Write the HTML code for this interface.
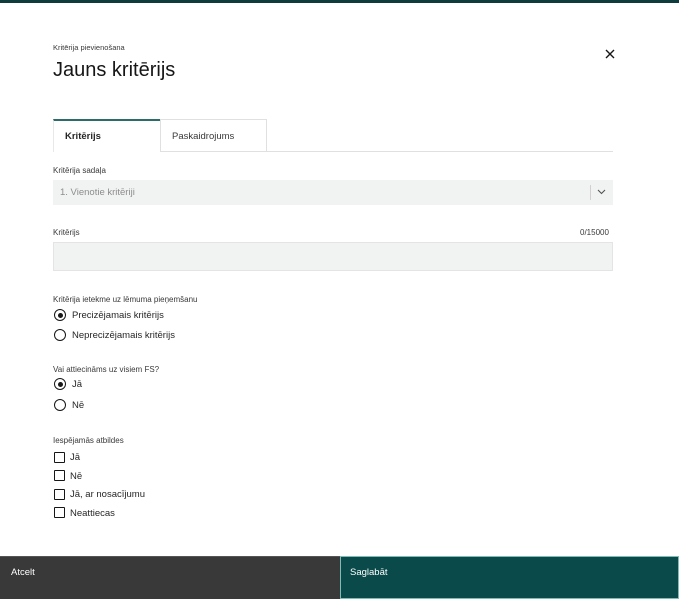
<!DOCTYPE html>
<html><head><meta charset="utf-8"><style>
*{margin:0;padding:0;box-sizing:border-box}
body{width:679px;height:599px;background:#fff;font-family:"Liberation Sans",sans-serif;color:#161616;position:relative;overflow:hidden}
.a{position:absolute;white-space:nowrap}
.lbl{font-size:8px;color:#393939}
.opt{font-size:9.5px;color:#262626}
.rad{position:absolute;width:12px;height:12px;border:1px solid #161616;border-radius:50%}
.rad.on::after{content:"";position:absolute;left:2.5px;top:2.5px;width:5px;height:5px;border-radius:50%;background:#161616}
.cb{position:absolute;width:11px;height:11px;border:1px solid #161616;border-radius:1px}
</style></head><body>
<div class="a" style="left:0;top:0;width:679px;height:3px;background:#0e3c3c"></div>
<div class="a lbl" style="left:53px;top:43px;font-size:7.5px">Kritērija pievienošana</div>
<div class="a" style="left:53px;top:59px;font-size:20px;color:#161616">Jauns kritērijs</div>
<svg class="a" style="left:605px;top:49px" width="10" height="10" viewBox="0 0 10 10"><path d="M1 1L9 9M9 1L1 9" stroke="#161616" stroke-width="1.4"/></svg>
<div class="a" style="left:53px;top:151px;width:560px;height:1px;background:#e0e0e0"></div>
<div class="a" style="left:53px;top:119px;width:107px;height:33px;background:#fff;border-top:2px solid #2d6b6b;border-left:1px solid #e8e8e8"></div>
<div class="a" style="left:65px;top:131px;font-size:9.5px;font-weight:bold;color:#262626">Kritērijs</div>
<div class="a" style="left:160px;top:119px;width:107px;height:33px;border:1px solid #e0e0e0;border-bottom:none"></div>
<div class="a" style="left:172px;top:131px;font-size:9.5px;color:#393939">Paskaidrojums</div>
<div class="a lbl" style="left:53px;top:166px">Kritērija sadaļa</div>
<div class="a" style="left:53px;top:180px;width:560px;height:25px;background:#f1f2f2"></div>
<div class="a" style="left:60px;top:187px;font-size:9.5px;color:#8d8d8d">1. Vienotie kritēriji</div>
<div class="a" style="left:590px;top:185px;width:1px;height:15px;background:#d0d0d0"></div>
<svg class="a" style="left:597px;top:189px" width="9" height="6" viewBox="0 0 9 6"><path d="M1 1L4.5 4.5L8 1" stroke="#525252" fill="none" stroke-width="1.1"/></svg>
<div class="a lbl" style="left:53px;top:228px">Kritērijs</div>
<div class="a lbl" style="left:580px;top:228px">0/15000</div>
<div class="a" style="left:53px;top:242px;width:560px;height:29px;background:#f1f2f2;border:1px solid #e4e4e4"></div>
<div class="a lbl" style="left:53px;top:295px">Kritērija ietekme uz lēmuma pieņemšanu</div>
<div class="rad on" style="left:54px;top:309px"></div><div class="a opt" style="left:72px;top:310px">Precizējamais kritērijs</div>
<div class="rad" style="left:54px;top:329px"></div><div class="a opt" style="left:72px;top:330px">Neprecizējamais kritērijs</div>
<div class="a lbl" style="left:53px;top:365px">Vai attiecināms uz visiem FS?</div>
<div class="rad on" style="left:54px;top:378px"></div><div class="a opt" style="left:72px;top:379px">Jā</div>
<div class="rad" style="left:54px;top:399px"></div><div class="a opt" style="left:72px;top:400px">Nē</div>
<div class="a lbl" style="left:53px;top:436px">Iespējamās atbildes</div>
<div class="cb" style="left:54px;top:452px"></div><div class="a opt" style="left:70px;top:452px">Jā</div>
<div class="cb" style="left:54px;top:470px"></div><div class="a opt" style="left:70px;top:471px">Nē</div>
<div class="cb" style="left:54px;top:489px"></div><div class="a opt" style="left:70px;top:489px">Jā, ar nosacījumu</div>
<div class="cb" style="left:54px;top:507px"></div><div class="a opt" style="left:70px;top:508px">Neattiecas</div>
<div class="a" style="left:0;top:556px;width:340px;height:43px;background:#393939;border-top:1px solid #555"></div>
<div class="a" style="left:11px;top:567px;font-size:9.5px;color:#fff">Atcelt</div>
<div class="a" style="left:340px;top:556px;width:339px;height:43px;background:#0a4a4a;border:1px solid #7fbcb5"></div>
<div class="a" style="left:350px;top:567px;font-size:9.5px;color:#fff">Saglabāt</div>
</body></html>
